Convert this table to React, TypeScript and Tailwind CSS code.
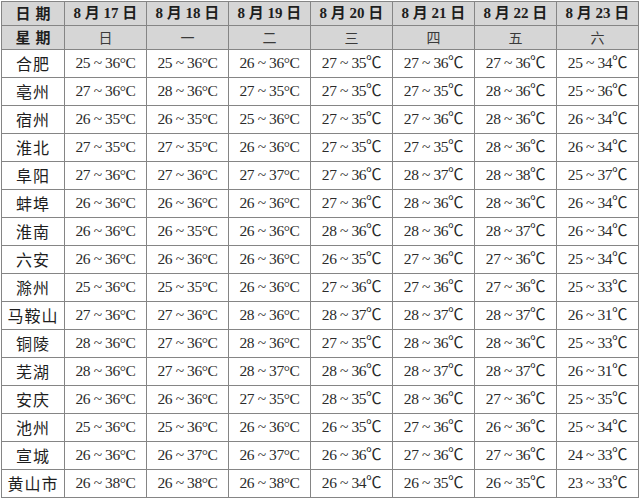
import React from 'react';

const dates = ['8 月 17 日', '8 月 18 日', '8 月 19 日', '8 月 20 日', '8 月 21 日', '8 月 22 日', '8 月 23 日'];
const weekdays = ['日', '一', '二', '三', '四', '五', '六'];

// [city, ...lows/highs per day]
const rows: [string, [number, number][]][] = [
  ['合肥', [[25, 36], [25, 36], [26, 36], [27, 35], [27, 36], [27, 36], [25, 34]]],
  ['亳州', [[27, 36], [28, 36], [27, 35], [27, 35], [27, 35], [28, 36], [25, 36]]],
  ['宿州', [[26, 35], [26, 35], [25, 36], [27, 35], [27, 36], [28, 36], [26, 34]]],
  ['淮北', [[27, 35], [27, 35], [26, 36], [27, 35], [27, 35], [28, 36], [26, 34]]],
  ['阜阳', [[27, 36], [27, 36], [27, 37], [27, 36], [28, 37], [28, 38], [25, 37]]],
  ['蚌埠', [[26, 36], [26, 36], [26, 36], [27, 36], [28, 36], [28, 36], [26, 34]]],
  ['淮南', [[26, 36], [26, 35], [26, 36], [28, 36], [28, 36], [28, 37], [26, 34]]],
  ['六安', [[26, 36], [26, 36], [26, 36], [26, 35], [27, 36], [27, 36], [25, 34]]],
  ['滁州', [[25, 36], [25, 35], [26, 36], [27, 36], [27, 36], [27, 36], [25, 33]]],
  ['马鞍山', [[27, 36], [27, 36], [28, 36], [28, 37], [28, 37], [28, 37], [26, 31]]],
  ['铜陵', [[28, 36], [27, 36], [28, 36], [27, 35], [28, 36], [28, 36], [25, 33]]],
  ['芜湖', [[28, 36], [27, 36], [28, 37], [28, 36], [28, 37], [28, 37], [26, 31]]],
  ['安庆', [[26, 36], [26, 36], [27, 35], [28, 35], [28, 36], [27, 36], [25, 35]]],
  ['池州', [[25, 36], [25, 36], [26, 36], [26, 35], [27, 36], [26, 36], [25, 34]]],
  ['宣城', [[26, 36], [26, 37], [26, 37], [26, 36], [27, 36], [27, 36], [24, 33]]],
  ['黄山市', [[26, 38], [26, 38], [26, 38], [26, 34], [26, 35], [26, 35], [23, 33]]],
];

const cell = 'border border-[#858585] p-0 text-center align-middle';

export default function App() {
  return (
    <div className="bg-white w-[641px] h-[500px] pt-px pl-px text-[#1e1e1e] font-['Liberation_Serif','Noto_Sans_CJK_SC',serif]">
      <table className="table-fixed border-collapse w-[636px]">
        <colgroup>
          <col className="w-[63px]" />
          {dates.map((d) => (
            <col key={d} className="w-[82px]" />
          ))}
        </colgroup>
        <tbody>
          <tr className="h-[24px] bg-[#d6d6d6]">
            <td className={`${cell} font-['Noto_Sans_CJK_SC',sans-serif] font-bold text-[15px] tracking-[5px] pl-[5px]`}>日期</td>
            {dates.map((d) => (
              <td key={d} className={`${cell} font-bold text-[15px] whitespace-pre`}>
                {d}
              </td>
            ))}
          </tr>
          <tr className="h-[23px] bg-[#d6d6d6]">
            <td className={`${cell} font-['Noto_Sans_CJK_SC',sans-serif] font-bold text-[15px] tracking-[5px] pl-[5px]`}>星期</td>
            {weekdays.map((w) => (
              <td key={w} className={`${cell} font-['Noto_Sans_CJK_SC',sans-serif] text-[14px] text-[#3a3a3a]`}>
                {w}
              </td>
            ))}
          </tr>
          {rows.map(([city, temps]) => (
            <tr key={city} className="h-[28px]">
              <td className={`${cell} font-['Noto_Sans_CJK_SC',sans-serif] text-[16px] tracking-[1px]`}>{city}</td>
              {temps.map(([lo, hi], i) => (
                <td key={i} className={`${cell} text-[15.5px] tracking-[-0.4px] text-[#2a2a2a]`}>
                  {i < 3 ? `${lo} ~ ${hi}°C` : `${lo} ~ ${hi}℃`}
                </td>
              ))}
            </tr>
          ))}
        </tbody>
      </table>
    </div>
  );
}
